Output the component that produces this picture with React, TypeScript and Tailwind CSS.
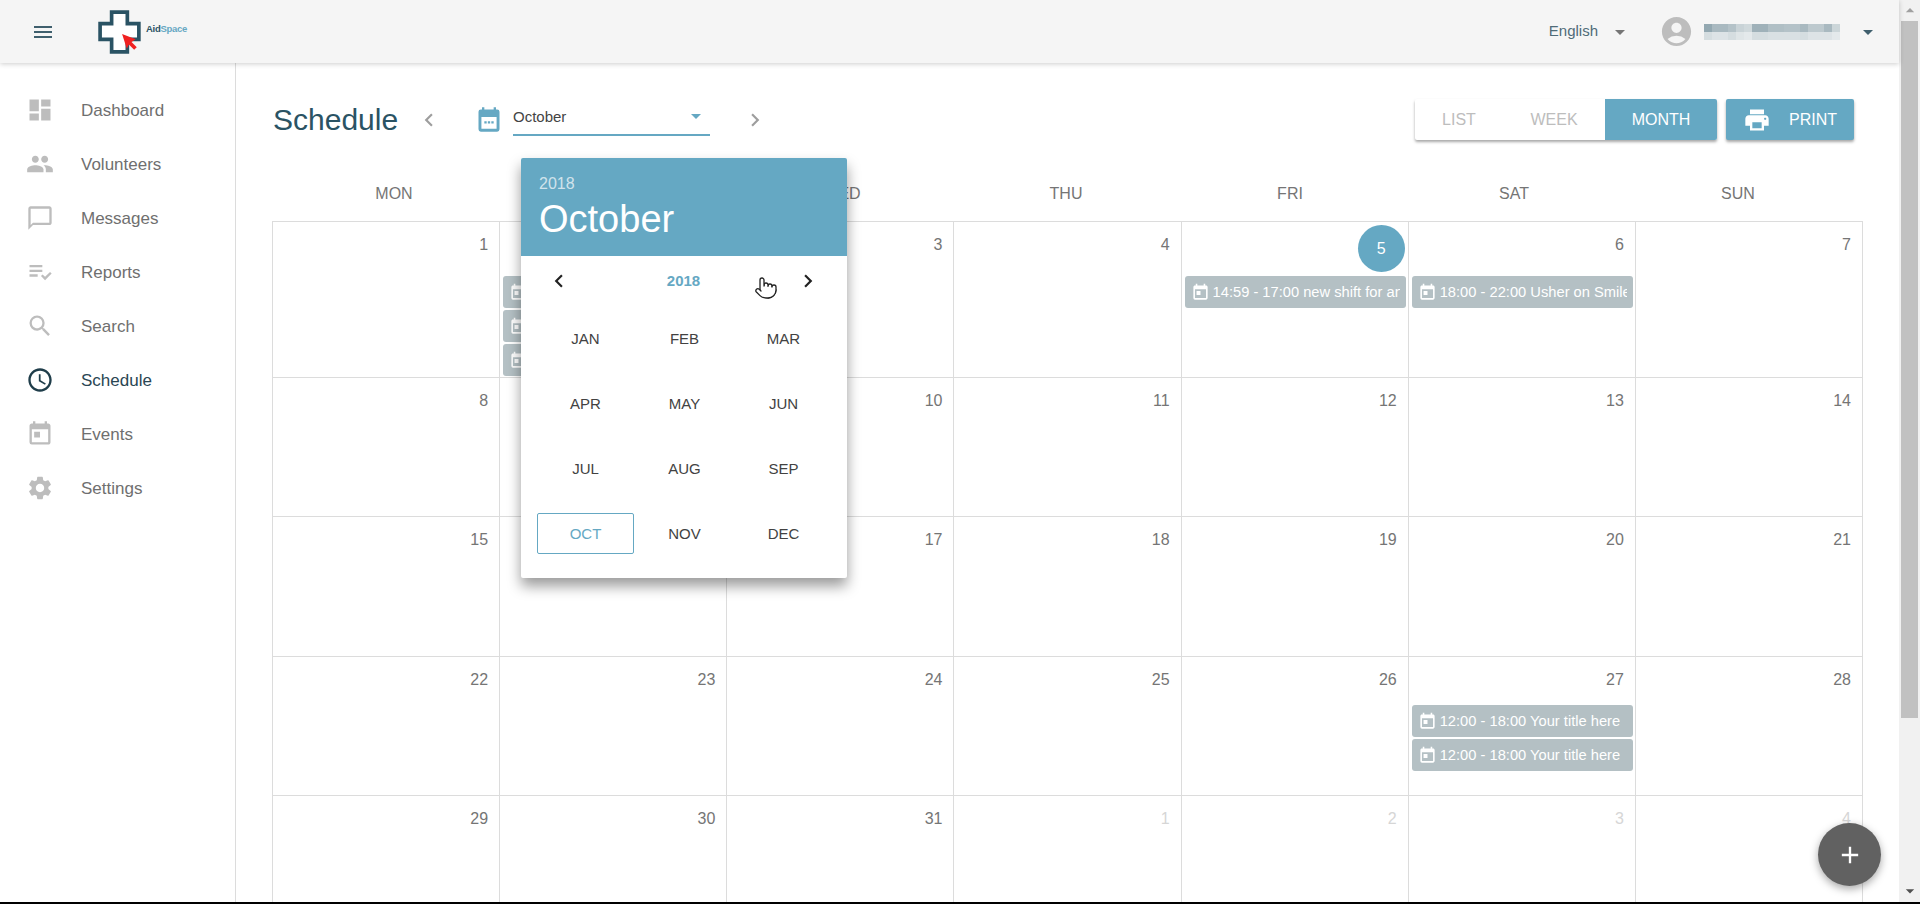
import { Pointer } from "lucide-react";
import {
    MdAccessTime,
    MdAccountCircle,
    MdAdd,
    MdArrowDropDown,
    MdArrowDropUp,
    MdChatBubbleOutline,
    MdChevronLeft,
    MdChevronRight,
    MdDashboard,
    MdMenu,
    MdPeople,
    MdPlaylistAddCheck,
    MdPrint,
    MdSearch,
    MdSettings,
    MdToday,
} from "react-icons/md";

const navItems = [
    { label: "Dashboard", icon: MdDashboard },
    { label: "Volunteers", icon: MdPeople },
    { label: "Messages", icon: MdChatBubbleOutline },
    { label: "Reports", icon: MdPlaylistAddCheck },
    { label: "Search", icon: MdSearch },
    { label: "Schedule", icon: MdAccessTime, active: true },
    { label: "Events", icon: MdToday },
    { label: "Settings", icon: MdSettings },
];

const weekDays = ["MON", "TUE", "WED", "THU", "FRI", "SAT", "SUN"];
const months = ["JAN", "FEB", "MAR", "APR", "MAY", "JUN", "JUL", "AUG", "SEP", "OCT", "NOV", "DEC"];

// blurred user name in the header
const mosaicTop = ["#93a8b1", "#a9b9c0", "#a9b9c0", "#b4c2c8", "#c9d3d7", "#d0d9dc", "#9fb1b9", "#9fb1b9", "#b0bfc5", "#b0bfc5", "#b4c2c8", "#b4c2c8", "#a9b9c0", "#bdc9ce", "#bdc9ce", "#a9b9c0", "#ccd6d9"];
const mosaicBottom = ["#d5dde0", "#dde3e6", "#dde3e6", "#d5dde0", "#dfe5e7", "#e4e9eb", "#d5dde0", "#d5dde0", "#d9e0e3", "#d9e0e3", "#d9e0e3", "#d9e0e3", "#d5dde0", "#dde3e6", "#dde3e6", "#dde3e6", "#e4e9eb"];

type CalendarEvent = { text: string };

type DayCell = {
    day: number;
    muted?: boolean;
    today?: boolean;
    events?: CalendarEvent[];
};

const yourTitle = { text: "12:00 - 18:00 Your title here" };

const weeks: { height: string; dateHeight: string; days: DayCell[] }[] = [
    {
        height: "h-[156px]",
        dateHeight: "h-[54px]",
        days: [
            { day: 1 },
            { day: 2, events: [yourTitle, yourTitle, yourTitle] },
            { day: 3 },
            { day: 4 },
            { day: 5, today: true, events: [{ text: "14:59 - 17:00 new shift for an event" }] },
            { day: 6, events: [{ text: "18:00 - 22:00 Usher on Smile event" }] },
            { day: 7 },
        ],
    },
    {
        height: "h-[139px]",
        dateHeight: "h-[48px]",
        days: [8, 9, 10, 11, 12, 13, 14].map((day) => ({ day })),
    },
    {
        height: "h-[140px]",
        dateHeight: "h-[48px]",
        days: [15, 16, 17, 18, 19, 20, 21].map((day) => ({ day })),
    },
    {
        height: "h-[139px]",
        dateHeight: "h-[48px]",
        days: [
            { day: 22 },
            { day: 23 },
            { day: 24 },
            { day: 25 },
            { day: 26 },
            { day: 27, events: [yourTitle, yourTitle] },
            { day: 28 },
        ],
    },
    {
        height: "h-[139px]",
        dateHeight: "h-[48px]",
        days: [
            { day: 29 },
            { day: 30 },
            { day: 31 },
            { day: 1, muted: true },
            { day: 2, muted: true },
            { day: 3, muted: true },
            { day: 4, muted: true },
        ],
    },
];

const Logo = () => (
    <div className="ml-[43px] flex items-center">
        <svg width="44" height="44" viewBox="0 0 42 42">
            <path
                d="M13 2h15v11h11v15H28v12H13V28H2V13h11z"
                fill="#ffffff"
                stroke="#2a5364"
                strokeWidth="3.5"
            />
            <path d="M23 23l13 5-4 2.5 5 5-2.5 2.5-5-5-2 4z" fill="#f02020" />
        </svg>
        <span className="ml-[4px] mt-[-5px] text-[9.5px] font-bold tracking-[-0.3px] text-[#2a5364]">
            Aid<span className="text-[#65a8c3]">Space</span>
        </span>
    </div>
);

const DateIcon = () => (
    <svg width="28" height="28" viewBox="0 0 24 24" className="ml-[33px] text-[#65a8c3]" fill="currentColor">
        <path
            fillRule="evenodd"
            d="M19 3h-1V1h-2v2H8V1H6v2H5a2 2 0 0 0-2 2v15a2 2 0 0 0 2 2h14a2 2 0 0 0 2-2V5a2 2 0 0 0-2-2zm-.5 16.5h-13V9.5h13z"
        />
        <path d="M8 13h2v2H8zM11 13h2v2h-2zM14 13h2v2h-2z" />
    </svg>
);

const Header = () => (
    <header className="relative z-10 flex h-[63px] shrink-0 items-center bg-[#f5f5f5] shadow-[0_1px_5px_rgba(0,0,0,0.2)]">
        <MdMenu size={24} className="ml-[31px] text-[#3f5f6d]" />
        <Logo />
        <div className="ml-auto flex items-center">
            <span className="text-[15px] text-[#4f6b78]">English</span>
            <MdArrowDropDown size={24} className="ml-[10px] text-[#757575]" />
            <MdAccountCircle size={35} className="ml-[27px] text-[#bdbdbd]" />
            <div className="ml-[10px] flex flex-col">
                <div className="flex">
                    {mosaicTop.map((color, i) => (
                        <span key={i} className="h-[8px] w-[8px]" style={{ backgroundColor: color }} />
                    ))}
                </div>
                <div className="flex">
                    {mosaicBottom.map((color, i) => (
                        <span key={i} className="h-[8px] w-[8px]" style={{ backgroundColor: color }} />
                    ))}
                </div>
            </div>
            <MdArrowDropDown size={24} className="ml-[16px] mr-[19px] text-[#3f5f6d]" />
        </div>
    </header>
);

const Sidebar = () => (
    <aside className="w-[236px] shrink-0 border-r border-[#dcdcdc] pt-[20px]">
        {navItems.map(({ label, icon: Icon, active }) => (
            <div key={label} className="flex h-[54px] items-center pl-[26px]">
                <Icon size={28} className={active ? "text-[#1f3d4a]" : "text-[#bdbdbd]"} />
                <span className={`ml-[27px] pt-[2px] text-[17px] ${active ? "text-[#2a4653]" : "text-[#6f6f6f]"}`}>{label}</span>
            </div>
        ))}
    </aside>
);

const Toolbar = () => (
    <div className="flex h-[41px] items-center">
        <h1 className="ml-[1px] w-[140px] text-[30px] font-normal text-[#2a5364]">Schedule</h1>
        <MdChevronLeft size={26} className="ml-[3px] text-[#9e9e9e]" />
        <DateIcon />
        <div className="ml-[10px] mt-[-5px] flex h-[37px] w-[197px] items-center justify-between border-b-2 border-[#65a8c3]">
            <span className="pt-[2px] text-[15px] text-[#444]">October</span>
            <MdArrowDropDown size={24} className="mr-[2px] text-[#65a8c3]" />
        </div>
        <MdChevronRight size={26} className="ml-[32px] text-[#9e9e9e]" />
        <div className="ml-auto mr-[45px] flex">
            <div className="flex h-[41px] overflow-hidden rounded-[2px] bg-white text-[16px] shadow-[0_2px_3px_rgba(0,0,0,0.35)]">
                <span className="flex w-[88px] items-center justify-center text-[#bdbdbd]">LIST</span>
                <span className="flex w-[102px] items-center justify-center text-[#bdbdbd]">WEEK</span>
                <span className="flex w-[112px] items-center justify-center bg-[#65a8c3] text-white">MONTH</span>
            </div>
            <div className="ml-[9px] flex h-[41px] w-[128px] items-center rounded-[2px] bg-[#65a8c3] pl-[17px] text-[16px] text-white shadow-[0_2px_3px_rgba(0,0,0,0.35)]">
                <MdPrint size={28} />
                <span className="ml-[18px]">PRINT</span>
            </div>
        </div>
    </div>
);

const EventChip = ({ text }: CalendarEvent) => (
    <div className="mb-[2px] ml-[3px] mr-[2px] flex h-[32px] items-center overflow-hidden rounded-[3px] bg-[#b4c0c4] pl-[6px] pr-[6px] text-[14.7px] text-white">
        <MdToday size={19} className="shrink-0" />
        <span className="ml-[3px] overflow-hidden whitespace-nowrap">{text}</span>
    </div>
);

const DayNumber = ({ cell, dateHeight }: { cell: DayCell; dateHeight: string }) => {
    if (cell.today) {
        return (
            <div className={`flex ${dateHeight} justify-end pr-[3px] pt-[3px]`}>
                <span className="flex h-[47px] w-[47px] items-center justify-center rounded-full bg-[#65a8c3] text-[16px] text-white">
                    {cell.day}
                </span>
            </div>
        );
    }
    return (
        <div className={`flex ${dateHeight} justify-end pr-[11px] pt-[11px] text-[16px] leading-[24px] ${cell.muted ? "text-[#d6d6d6]" : "text-[#757575]"}`}>
            {cell.day}
        </div>
    );
};

const Calendar = () => (
    <div className="w-[1591px]">
        <div className="ml-[10px] mt-[25px] grid h-[56px] w-[1568px] grid-cols-7 items-center pt-[1px] text-center text-[16px] text-[#757575]">
            {weekDays.map((day) => (
                <span key={day}>{day}</span>
            ))}
        </div>
        <div className="grid grid-cols-7 border-l border-t border-[#dcdcdc]">
            {weeks.map((week) =>
                week.days.map((cell, i) => (
                    <div key={`${week.height}-${cell.day}-${i}`} className={`${week.height} min-w-0 border-b border-r border-[#dcdcdc]`}>
                        <DayNumber cell={cell} dateHeight={week.dateHeight} />
                        {cell.events?.map((event, j) => (
                            <EventChip key={j} text={event.text} />
                        ))}
                    </div>
                )),
            )}
        </div>
    </div>
);

const MonthPicker = () => (
    <div className="absolute left-[521px] top-[158px] z-20 h-[420px] w-[326px] overflow-hidden rounded-[2px] bg-white shadow-[0_8px_14px_rgba(0,0,0,0.4)]">
        <div className="h-[98px] bg-[#65a8c3] pl-[18px] pt-[14px] text-white">
            <div className="text-[16px] leading-[24px] text-white/70">2018</div>
            <div className="mt-[1px] text-[38px] leading-[44px]">October</div>
        </div>
        <div className="relative flex h-[50px] items-center justify-between pl-[25px] pr-[26px]">
            <MdChevronLeft size={26} className="text-[#222]" />
            <span className="text-[15px] font-bold text-[#65a8c3]">2018</span>
            <MdChevronRight size={26} className="text-[#222]" />
            <Pointer size={24} strokeWidth={1.3} fill="#ffffff" className="absolute left-[233px] top-[20px] text-[#222]" />
        </div>
        <div className="grid grid-cols-[repeat(3,99px)] grid-rows-[repeat(4,65px)] pl-[15px]">
            {months.map((month) => (
                <div key={month} className="flex items-center justify-center">
                    {month === "OCT" ? (
                        <span className="flex h-[41px] w-[97px] items-center justify-center rounded-[2px] border border-[#65a8c3] pt-[1px] text-[15px] text-[#65a8c3]">
                            {month}
                        </span>
                    ) : (
                        <span className="pt-[2px] text-[15px] text-[#424242]">{month}</span>
                    )}
                </div>
            ))}
        </div>
    </div>
);

const Scrollbar = () => (
    <div className="flex w-[21px] shrink-0 flex-col items-center bg-[#f1f1f1]">
        <MdArrowDropUp size={20} className="h-[21px] text-[#a0a0a0]" />
        <div className="h-[697px] w-[17px] bg-[#c1c1c1]" />
        <div className="mt-auto h-[21px]">
            <MdArrowDropDown size={20} className="text-[#505050]" />
        </div>
    </div>
);

export default function App() {
    return (
        <div className="relative flex h-[904px] w-[1920px] flex-col overflow-hidden bg-white font-['Liberation_Sans',Arial,sans-serif]">
            <div className="flex min-h-0 flex-1">
                <div className="flex min-w-0 flex-1 flex-col">
                    <Header />
                    <div className="flex min-h-0 flex-1">
                        <Sidebar />
                        <main className="min-w-0 flex-1 overflow-hidden pl-[36px] pt-[36px]">
                            <Toolbar />
                            <Calendar />
                        </main>
                    </div>
                </div>
                <Scrollbar />
            </div>
            <div className="h-[2px] shrink-0 bg-black" />
            <MonthPicker />
            <button
                type="button"
                className="absolute left-[1818px] top-[823px] z-20 flex h-[63px] w-[63px] items-center justify-center rounded-full bg-[#616161] text-white shadow-[0_3px_8px_rgba(0,0,0,0.35)]"
            >
                <MdAdd size={28} />
            </button>
        </div>
    );
}
